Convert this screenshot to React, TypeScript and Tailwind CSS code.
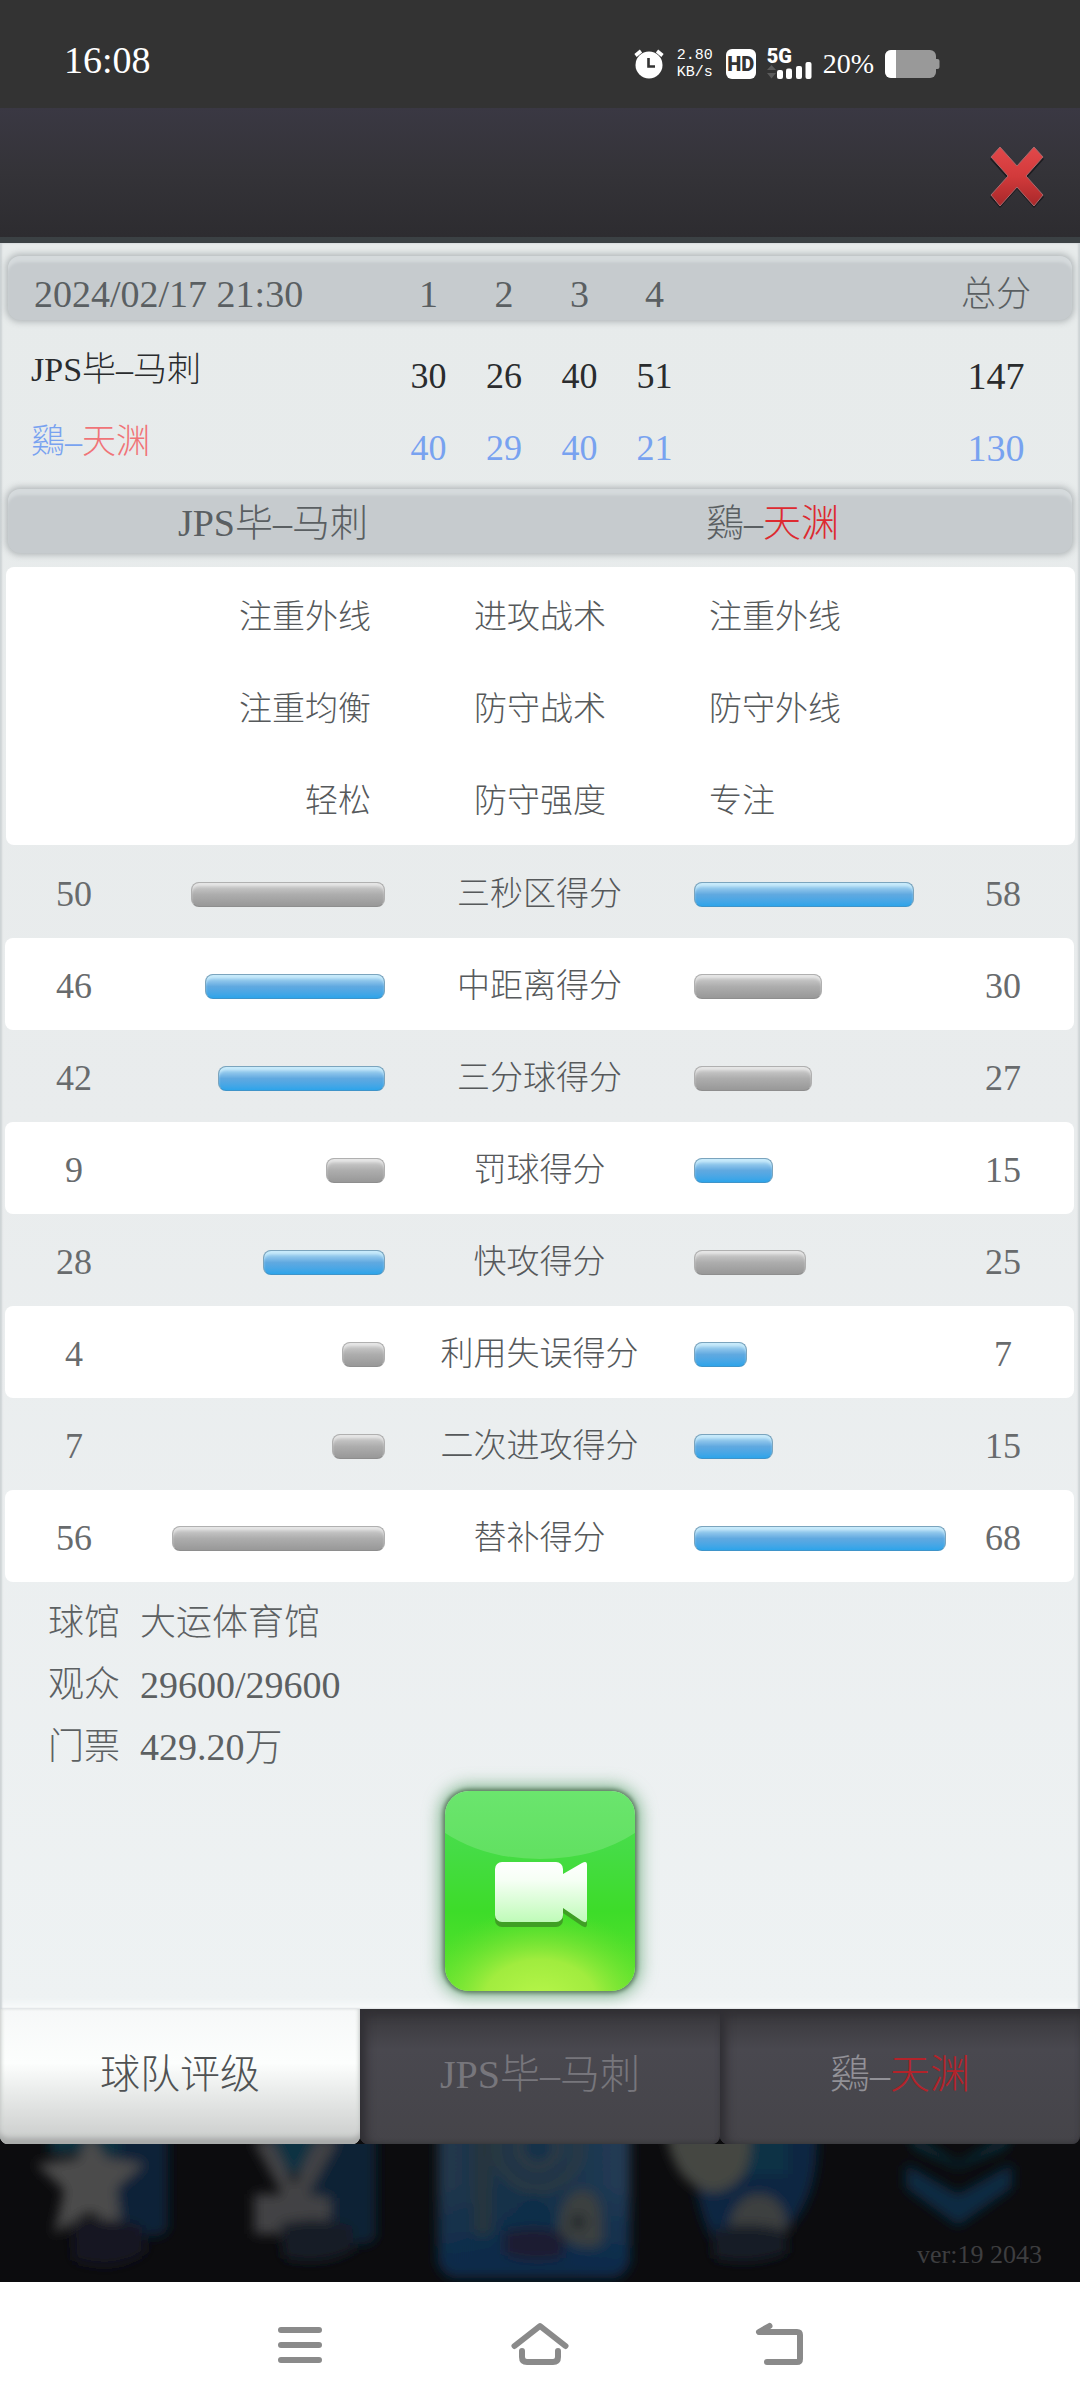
type Part = { text: string; className?: string };

const HOME = "JPS毕–马刺";

const quarters = ["1", "2", "3", "4"];

const tactics = [
  { home: "注重外线", label: "进攻战术", away: "注重外线" },
  { home: "注重均衡", label: "防守战术", away: "防守外线" },
  { home: "轻松", label: "防守强度", away: "专注" },
];

const stats = [
  { label: "三秒区得分", home: 50, away: 58 },
  { label: "中距离得分", home: 46, away: 30 },
  { label: "三分球得分", home: 42, away: 27 },
  { label: "罚球得分", home: 9, away: 15 },
  { label: "快攻得分", home: 28, away: 25 },
  { label: "利用失误得分", home: 4, away: 7 },
  { label: "二次进攻得分", home: 7, away: 15 },
  { label: "替补得分", home: 56, away: 68 },
];

function TeamName({ parts }: { parts: Part[] }) {
  return (
    <>
      {parts.map((p) => (
        <span key={p.text} className={p.className}>
          {p.text}
        </span>
      ))}
    </>
  );
}

function StatusBar() {
  return (
    <div className="flex h-[108px] items-center justify-between bg-[#333333] pt-5 pr-[140px] pl-16 text-white">
      <time className="pb-2 text-[38px] leading-none font-light">16:08</time>
      <div className="flex items-center gap-[11px]">
        <svg width="30" height="30" viewBox="0 0 30 30" aria-label="闹钟">
          <circle cx="15" cy="16" r="13.5" fill="#fff" />
          <path d="M1.5 6.5 7 2M28.5 6.5 23 2" stroke="#fff" strokeWidth="3.6" />
          <path d="M14.5 9v8.5h6.5" stroke="#333" strokeWidth="2.6" fill="none" />
        </svg>
        <div className="flex w-[40px] flex-col items-center font-['Liberation_Mono',monospace] text-[15px] leading-[17px]">
          <span>2.80</span>
          <span>KB/s</span>
        </div>
        <span className="flex size-[30px] items-center justify-center rounded-md bg-white font-[Roboto] text-[20px] leading-none font-black text-[#333]">
          HD
        </span>
        <div className="relative h-[32px] w-[45px]">
          <span className="block font-[Roboto] text-[20px] leading-4 font-black">5G</span>
          <svg className="absolute inset-0" width="45" height="32" viewBox="0 0 45 32" aria-hidden="true">
            <path d="M0 22l4.5-5 4.5 5zM0 25l4.5 5.500 4.5-5.500z" fill="#5a5a5a" />
            <g fill="#fff">
              <rect x="10" y="22" width="6" height="9" rx="2" />
              <rect x="19" y="20.500" width="6" height="10.500" rx="2" />
              <rect x="29" y="18" width="6" height="13" rx="2" />
              <rect x="38.500" y="14" width="6" height="17" rx="2" />
            </g>
          </svg>
        </div>
        <span className="text-[28px] leading-none font-light">20%</span>
        <svg width="55" height="28" viewBox="0 0 55 28" aria-label="电量">
          <rect x="0" y="0" width="51" height="28" rx="6" fill="#999" />
          <path d="M11 0H6a6 6 0 0 0-6 6v16a6 6 0 0 0 6 6h5z" fill="#fff" />
          <path d="M51 9h1.500a2 2 0 0 1 2 2v6a2 2 0 0 1-2 2H51z" fill="#999" />
        </svg>
      </div>
    </div>
  );
}

function TitleBar() {
  return (
    <header className="flex h-[135px] items-center justify-end border-b-[6px] border-[#3b4144] bg-linear-to-b from-[#3a3843] via-[#343338] to-[#2d2c30] pt-2 pr-9">
      <button type="button" aria-label="关闭">
        <svg width="54" height="62" viewBox="0 0 54 62">
          <defs>
            <linearGradient id="close" x1="0" y1="0" x2="0" y2="1">
              <stop offset="0" stopColor="#e2484a" />
              <stop offset="0.500" stopColor="#d23a3b" />
              <stop offset="1" stopColor="#a8282a" />
            </linearGradient>
          </defs>
          <path d="M10 3 27 22 44 3 54 13 37 32 54 51 44 62 27 43 10 62 0 51 17 32 0 13z" fill="#1d1c20" />
          <path d="M10 1 27 20 44 1 53 11 36 30 53 49 44 60 27 41 10 60 1 49 18 30 1 11z" fill="url(#close)" stroke="#a86a6e" strokeWidth="1" />
        </svg>
      </button>
    </header>
  );
}

const barClass =
  "mx-2 h-16 rounded-xl bg-[#c6cbce] text-[#5a5f62] shadow-[0_0_6px_2px_rgba(110,118,122,0.45),inset_0_7px_3px_-1px_#d5dadc]";

function ScoreTable() {
  const cols =
    "grid grid-cols-[383fr_75fr_76fr_75fr_75fr_228fr_152fr] items-center text-center";
  const rows = [
    {
      name: [{ text: HOME }],
      scores: [30, 26, 40, 51],
      total: 147,
      color: "text-[#2a2c2e]",
    },
    {
      name: [{ text: "鷄–" }, { text: "天渊", className: "text-[#f07478]" }],
      scores: [40, 29, 40, 21],
      total: 130,
      color: "text-[#78a2f0]",
    },
  ];
  return (
    <table className="block">
      <thead className="block">
        <tr className={`${cols} ${barClass} pt-3`}>
          <th scope="col" className="pl-[26px] text-left text-[38px] leading-none font-light">
            2024/02/17 21:30
          </th>
          {quarters.map((q) => (
            <th key={q} scope="col" className="text-[38px] leading-none font-light">
              {q}
            </th>
          ))}
          <th scope="col" className="col-start-7 text-[35px] leading-none font-light">
            总分
          </th>
        </tr>
      </thead>
      <tbody className="block px-2 pt-5 pb-[5px]">
        {rows.map((r) => (
          <tr key={r.total} className={`${cols} h-18 ${r.color}`}>
            <th scope="row" className="pb-3 pl-[23px] text-left text-[34px] leading-none font-light">
              <TeamName parts={r.name} />
            </th>
            {r.scores.map((s, i) => (
              <td key={i} className="text-[36px] leading-none">
                {s}
              </td>
            ))}
            <td className="col-start-7 text-[38px] leading-none">{r.total}</td>
          </tr>
        ))}
      </tbody>
    </table>
  );
}

function Tactics() {
  const cols = "grid items-center";
  return (
    <>
      <div className={`${cols} ${barClass} mb-[14px] grid-cols-[360fr_338fr_366fr] pt-1 text-[38px] leading-none font-light`}>
        <h2 className="text-right">{HOME}</h2>
        <h2 className="col-start-3">
          <TeamName parts={[{ text: "鷄–" }, { text: "天渊", className: "text-[#dd2a30]" }]} />
        </h2>
      </div>
      <div className="mr-[5px] mb-px ml-[6px] rounded-lg bg-white pb-[2px] text-[33px] leading-none font-light text-[#56595b]">
        {tactics.map((t) => (
          <div key={t.label} className={`${cols} h-[92px] grid-cols-[365fr_338fr_366fr] pt-2`}>
            <span className="text-right">{t.home}</span>
            <span className="text-center">{t.label}</span>
            <span>{t.away}</span>
          </div>
        ))}
      </div>
    </>
  );
}

function Bar({ value, win }: { value: number; win: boolean }) {
  const tone = win
    ? "border-[#7ba4bd] border-b-[#3f94c9] from-[#b9e0f5] via-[#60a9e0] to-[#2ca4ea] shadow-[inset_0_4px_3px_-1px_#c8ebfb]"
    : "border-[#b0b0b0] border-b-[#8e8e8e] from-[#d4d4d4] via-[#adadad] to-[#989898] shadow-[inset_0_4px_3px_-1px_#e6e6e6]";
  return (
    <div
      className={`h-[25px] max-w-full rounded-lg border bg-linear-to-b ${tone}`}
      style={{ width: Math.round(30 + value * 3.27) }}
    />
  );
}

function Stats() {
  return (
    <table className="block text-[#56595b]">
      <tbody className="block">
        {stats.map((s, i) => (
          <tr
            key={s.label}
            className={`mr-[6px] ml-[5px] grid h-[92px] grid-cols-[138fr_242fr_309fr_254fr_110fr] items-center rounded-lg pt-1 pr-4 ${i % 2 ? "bg-white" : ""}`}
          >
            <td className="text-center text-[36px] leading-none text-[#686b6d]">{s.home}</td>
            <td className="flex justify-end">
              <Bar value={s.home} win={s.home > s.away} />
            </td>
            <th scope="row" className="text-center text-[33px] leading-none font-light">
              {s.label}
            </th>
            <td>
              <Bar value={s.away} win={s.away > s.home} />
            </td>
            <td className="text-center text-[36px] leading-none text-[#686b6d]">{s.away}</td>
          </tr>
        ))}
      </tbody>
    </table>
  );
}

function Arena() {
  return (
    <dl className="grid grid-cols-[auto_1fr] gap-x-5 pt-[10px] pl-12 text-[36px] leading-[62px] font-light text-[#5c6062]">
      <dt>球馆</dt>
      <dd>大运体育馆</dd>
      <dt>观众</dt>
      <dd className="text-[38px]">29600/29600</dd>
      <dt>门票</dt>
      <dd className="text-[38px]">429.20万</dd>
    </dl>
  );
}

function ReplayButton() {
  return (
    <button
      type="button"
      aria-label="观看录像"
      className="mx-auto mt-[13px] block overflow-hidden rounded-3xl shadow-[0_0_4px_2px_#5c7a60,0_0_16px_6px_rgba(70,150,90,0.6)]"
    >
      <svg width="190" height="200" viewBox="0 0 190 200" className="block">
        <defs>
          <linearGradient id="green" x1="0" y1="0" x2="0" y2="1">
            <stop offset="0" stopColor="#4fe052" />
            <stop offset="0.300" stopColor="#45dc45" />
            <stop offset="0.600" stopColor="#3ddc29" />
            <stop offset="1" stopColor="#5de42c" />
          </linearGradient>
          <radialGradient id="glow" gradientUnits="userSpaceOnUse" cx="0" cy="0" r="1" gradientTransform="translate(95 210) scale(125 92)">
            <stop offset="0" stopColor="#b8f64a" />
            <stop offset="0.450" stopColor="#aeee42" stopOpacity="0.850" />
            <stop offset="1" stopColor="#6be02f" stopOpacity="0" />
          </radialGradient>
          <linearGradient id="lens" x1="0" y1="0" x2="0" y2="1">
            <stop offset="0" stopColor="#ffffff" />
            <stop offset="0.300" stopColor="#f6fff5" />
            <stop offset="1" stopColor="#bffbb8" />
          </linearGradient>
        </defs>
        <rect width="190" height="200" fill="url(#green)" />
        <rect width="190" height="200" fill="url(#glow)" />
        <path d="M0 0h190v42Q150 68 95 68T0 42z" fill="#fff" fillOpacity="0.160" />
        <g fill="#3f9f24" transform="translate(0 4)">
          <rect x="50" y="71" width="68" height="61" rx="7" />
          <path d="M118 83 137 72q5-2 5 2v55q0 5-5 2l-19-13z" />
        </g>
        <g fill="url(#lens)">
          <rect x="50" y="71" width="68" height="60" rx="7" />
          <path d="M118 83 137 72q5-3 5 2v54q0 5-5 2l-19-13z" />
        </g>
      </svg>
    </button>
  );
}

function Tabs() {
  const tab = "flex h-[135px] items-center justify-center rounded-b-lg pb-1 text-[40px] leading-none font-light";
  const idle =
    "bg-linear-to-b from-[#38373b] via-[#49484f] via-30% to-[#454449] shadow-[inset_12px_0_10px_-6px_#302f34,inset_0_10px_8px_-4px_#313034,inset_0_-3px_4px_-2px_#39383c]";
  return (
    <nav className="grid grid-cols-3 bg-[#0c0c0e]">
      <button
        type="button"
        className={`${tab} bg-linear-to-b from-[#f6f8f8] via-[#fcfefd] via-40% to-[#c9cbca] text-[#4f5253] shadow-[inset_0_-8px_5px_-2px_#a9abaa,inset_3px_0_4px_-2px_#cfd1d1,inset_-3px_0_4px_-2px_#cfd1d1]`}
      >
        球队评级
      </button>
      <button type="button" className={`${tab} ${idle} text-[#77767c]`}>
        {HOME}
      </button>
      <button type="button" className={`${tab} ${idle} text-[#929197]`}>
        <TeamName parts={[{ text: "鷄–" }, { text: "天渊", className: "text-[#b3232a]" }]} />
      </button>
    </nav>
  );
}

/* Dimmed main menu showing under the dialog */
function DimmedMenu() {
  return (
    <div className="relative h-[138px] overflow-hidden bg-[#0c0c0e]">
      <svg viewBox="0 0 1080 138" preserveAspectRatio="xMidYMid slice" className="h-full w-full" aria-hidden="true">
        <defs>
          <filter id="soft" x="-10%" y="-20%" width="120%" height="140%">
            <feGaussianBlur stdDeviation="6" />
          </filter>
          <linearGradient id="tile" x1="0" y1="0" x2="1" y2="0">
            <stop offset="0" stopColor="#24384d" />
            <stop offset="0.500" stopColor="#123049" />
            <stop offset="1" stopColor="#253c55" />
          </linearGradient>
          <linearGradient id="tileFade" x1="0" y1="0" x2="0" y2="1">
            <stop offset="0" stopColor="#08294a" stopOpacity="0" />
            <stop offset="1" stopColor="#08294a" />
          </linearGradient>
        </defs>
        <g filter="url(#soft)">
          <path d="M100-20h68V80q0 12-12 12h-56z" fill="#0a2138" />
          <path d="M50-20h70v30H50z" fill="#0d3340" />
          <path d="M90-10 106 14 144 20 116 44 122 88 90 68 54 90 64 46 36 20 78 14z" fill="#4c4c4b" />
          <path d="M72 80q34-10 70 2l4 26q-32 22-72 8z" fill="#171824" />
          <path d="M310-20h66V88q0 12-12 12h-54z" fill="#0b2236" />
          <path d="M270-20h50v50h-50z" fill="#0e3043" />
          <path d="M252-4h20l22 44 22-44h22l-30 54 22 4v36h-76V50h28z" fill="#424344" />
          <path d="M280 80q36-10 72 2l2 24q-32 18-70 8z" fill="#181b28" />
          <rect x="438" y="-40" width="192" height="174" rx="20" fill="url(#tile)" />
          <rect x="438" y="40" width="192" height="94" rx="20" fill="url(#tileFade)" />
          <rect x="474" y="-20" width="18" height="112" rx="6" fill="#28343c" />
          <circle cx="538" cy="4" r="40" fill="none" stroke="#2f3a40" strokeWidth="9" />
          <circle cx="538" cy="4" r="20" fill="none" stroke="#343c40" strokeWidth="8" />
          <path d="M558 90Q560 44 584 46 606 48 602 100q-20 10-44-10z" fill="#3a4141" />
          <circle cx="578" cy="78" r="7" fill="#1c2428" />
          <path d="M504 88q40-10 62 4l-4 22q-36 6-58-4z" fill="#1a1d30" />
          <path d="M690-20H816q6 70-28 104l-16 24h-50Q694 80 690-20z" fill="#0a2543" />
          <path d="M744-10h44v40h-44z" fill="#0c3044" />
          <path d="M666-10h84q4 50-34 58-40-2-50-58z" fill="#444743" />
          <path d="M728 86q6-36 32-36 26 2 28 38z" fill="#3d403f" />
          <path d="M712 86q36-10 72 0l4 22q-34 16-74 6z" fill="#151a28" />
          <path d="M912-10 958 20 1008-10V2L958 24 912 2z" fill="#0c3040" />
          <path d="M906 20 958 50 1012 20V44L958 82 906 44z" fill="#0b2c42" />
        </g>
      </svg>
      <span className="absolute right-[38px] bottom-[13px] text-[26px] leading-7 text-[#3e3e40]">ver:19 2043</span>
    </div>
  );
}

function SystemNav() {
  const button = "flex w-60 items-center justify-center";
  return (
    <nav className="flex h-[126px] justify-center bg-white">
      <button type="button" aria-label="菜单" className={button}>
        <svg width="46" height="44" viewBox="0 0 46 44" fill="none" stroke="#8a8a8a" strokeWidth="6" strokeLinecap="round">
          <path d="M4 7h38M4 22h38M4 37h38" />
        </svg>
      </button>
      <button type="button" aria-label="主页" className={button}>
        <svg width="58" height="46" viewBox="0 0 58 46" fill="none" stroke="#8a8a8a" strokeWidth="6" strokeLinecap="round" strokeLinejoin="round">
          <path d="M3.500 24 29 4 54.500 24M11 29v6q0 5 5 5h26q5 0 5-5v-6" />
        </svg>
      </button>
      <button type="button" aria-label="返回" className={button}>
        <svg width="50" height="46" viewBox="0 0 50 46" fill="none" stroke="#8a8a8a" strokeWidth="6" strokeLinecap="round" strokeLinejoin="round">
          <path d="M14.500 4 4 10h38q3 0 3 3v24q0 3-3 3H12" />
        </svg>
      </button>
    </nav>
  );
}

export default function App() {
  return (
    <div className="min-h-screen bg-white font-['Liberation_Serif','Noto_Sans_CJK_SC',serif]">
      <StatusBar />
      <TitleBar />
      <main className="bg-linear-to-b from-[#e7ebeb] via-[#e9eced] to-[#eef2f3] pt-[13px] pb-[18px] shadow-[inset_2px_0_2px_#cdd2d4,inset_-2px_0_2px_#cdd2d4,inset_0_-8px_6px_-2px_#f8fafa]">
        <ScoreTable />
        <Tactics />
        <Stats />
        <Arena />
        <ReplayButton />
      </main>
      <Tabs />
      <DimmedMenu />
      <SystemNav />
    </div>
  );
}
